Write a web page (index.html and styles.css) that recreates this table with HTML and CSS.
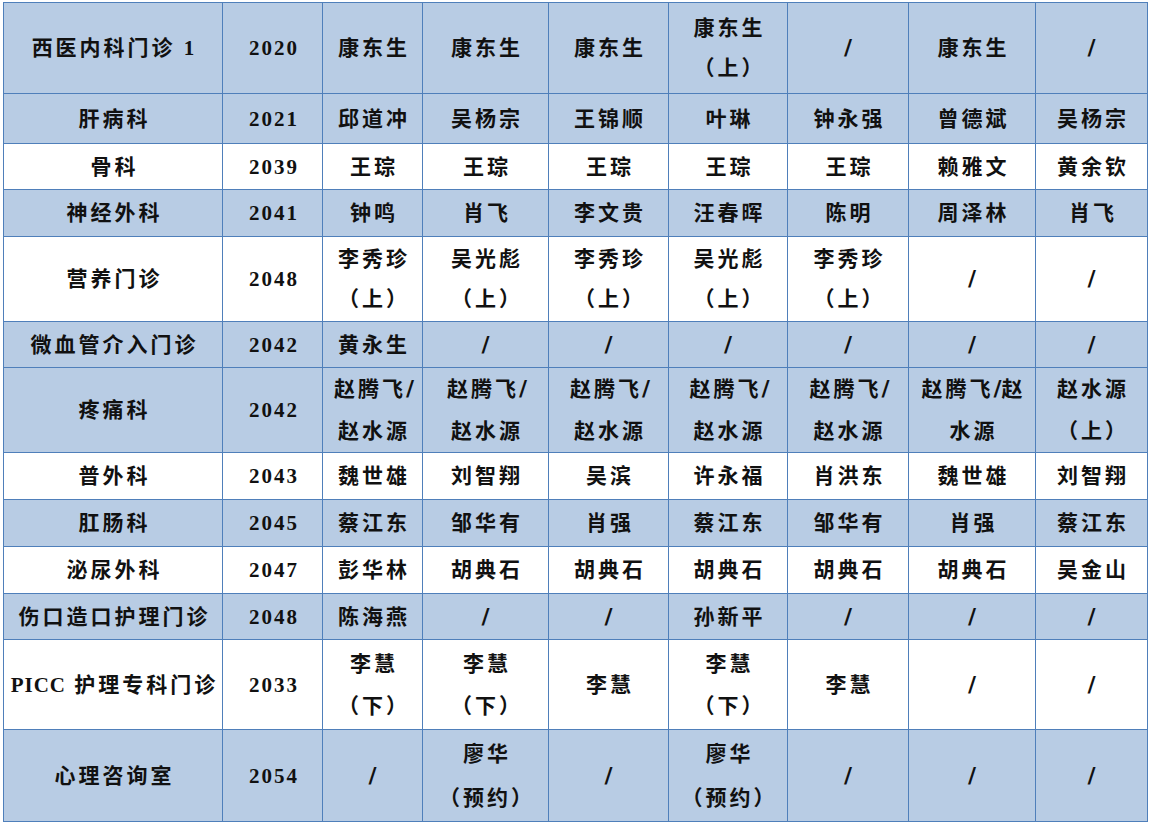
FILE: index.html
```html
<!DOCTYPE html>
<html lang="zh-CN">
<head>
<meta charset="utf-8">
<title>门诊排班表</title>
<link rel="stylesheet" href="styles.css">
</head>
<body>
<table class="schedule">
  <colgroup>
    <col class="c-dept"><col class="c-room"><col class="c-a"><col class="c-b"><col class="c-c"><col class="c-d"><col class="c-e"><col class="c-f"><col class="c-g">
  </colgroup>
  <tbody>
    <tr class="blue h91"><td>西医内科门诊 1</td><td class="num">2020</td><td>康东生</td><td>康东生</td><td>康东生</td><td>康东生<br>（上）</td><td class="none">/</td><td>康东生</td><td class="none">/</td></tr>
    <tr class="blue h50"><td>肝病科</td><td class="num">2021</td><td>邱道冲</td><td>吴杨宗</td><td>王锦顺</td><td>叶琳</td><td>钟永强</td><td>曾德斌</td><td>吴杨宗</td></tr>
    <tr class="white h46"><td>骨科</td><td class="num">2039</td><td>王琮</td><td>王琮</td><td>王琮</td><td>王琮</td><td>王琮</td><td>赖雅文</td><td>黄余钦</td></tr>
    <tr class="blue h47"><td>神经外科</td><td class="num">2041</td><td>钟鸣</td><td>肖飞</td><td>李文贵</td><td>汪春晖</td><td>陈明</td><td>周泽林</td><td>肖飞</td></tr>
    <tr class="white h85"><td>营养门诊</td><td class="num">2048</td><td>李秀珍<br>（上）</td><td>吴光彪<br>（上）</td><td>李秀珍<br>（上）</td><td>吴光彪<br>（上）</td><td>李秀珍<br>（上）</td><td class="none">/</td><td class="none">/</td></tr>
    <tr class="blue h46"><td>微血管介入门诊</td><td class="num">2042</td><td>黄永生</td><td class="none">/</td><td class="none">/</td><td class="none">/</td><td class="none">/</td><td class="none">/</td><td class="none">/</td></tr>
    <tr class="blue h85 tall"><td>疼痛科</td><td class="num">2042</td><td>赵腾飞<span class="sl">/</span><br>赵水源</td><td>赵腾飞<span class="sl">/</span><br>赵水源</td><td>赵腾飞<span class="sl">/</span><br>赵水源</td><td>赵腾飞<span class="sl">/</span><br>赵水源</td><td>赵腾飞<span class="sl">/</span><br>赵水源</td><td>赵腾飞<span class="sl">/</span>赵<br>水源</td><td>赵水源<br>（上）</td></tr>
    <tr class="white h47"><td>普外科</td><td class="num">2043</td><td>魏世雄</td><td>刘智翔</td><td>吴滨</td><td>许永福</td><td>肖洪东</td><td>魏世雄</td><td>刘智翔</td></tr>
    <tr class="blue h47"><td>肛肠科</td><td class="num">2045</td><td>蔡江东</td><td>邹华有</td><td>肖强</td><td>蔡江东</td><td>邹华有</td><td>肖强</td><td>蔡江东</td></tr>
    <tr class="white h47"><td>泌尿外科</td><td class="num">2047</td><td>彭华林</td><td>胡典石</td><td>胡典石</td><td>胡典石</td><td>胡典石</td><td>胡典石</td><td>吴金山</td></tr>
    <tr class="blue h46"><td>伤口造口护理门诊</td><td class="num">2048</td><td>陈海燕</td><td class="none">/</td><td class="none">/</td><td>孙新平</td><td class="none">/</td><td class="none">/</td><td class="none">/</td></tr>
    <tr class="white h90 tall"><td><span class="latin">PICC</span> 护理专科门诊</td><td class="num">2033</td><td>李慧<br>（下）</td><td>李慧<br>（下）</td><td>李慧</td><td>李慧<br>（下）</td><td>李慧</td><td class="none">/</td><td class="none">/</td></tr>
    <tr class="blue h92 taller"><td>心理咨询室</td><td class="num">2054</td><td class="none">/</td><td>廖华<br>（预约）</td><td class="none">/</td><td>廖华<br>（预约）</td><td class="none">/</td><td class="none">/</td><td class="none">/</td></tr>
  </tbody>
</table>
</body>
</html>
```

FILE: styles.css
```css
html, body {
  margin: 0;
  padding: 0;
  background: #ffffff;
}

body {
  padding: 2px 0 0 3px;
}

.schedule {
  border-collapse: collapse;
  table-layout: fixed;
  width: 1144px;
  font-family: "Liberation Serif", "Noto Sans CJK SC", serif;
  font-size: 21px;
  font-weight: 600;
  color: #111111;
  letter-spacing: 3px;
}

.c-dept { width: 219px; }
.c-room { width: 100px; }
.c-a { width: 100px; }
.c-b { width: 126px; }
.c-c { width: 120px; }
.c-d { width: 119px; }
.c-e { width: 121px; }
.c-f { width: 127px; }
.c-g { width: 112px; }

.schedule td {
  border: 1px solid #4f7fba;
  padding: 0 0 0 3px;
  text-align: center;
  vertical-align: middle;
  line-height: 40px;
  white-space: nowrap;
}

.schedule .tall td { line-height: 42px; }
.schedule .taller td { line-height: 44px; }

.schedule td.num {
  letter-spacing: 2px;
}

.schedule td.none {
  font-family: "DejaVu Sans", sans-serif;
  font-weight: bold;
  font-size: 22px;
  letter-spacing: 0;
  padding-left: 0;
}

.sl {
  font-family: "DejaVu Sans", sans-serif;
  font-weight: bold;
  font-size: 22px;
  letter-spacing: 0;
  line-height: 0;
}

.latin {
  letter-spacing: 1px;
}

.blue td { background: #b8cce4; }
.white td { background: #ffffff; }

.h46 { height: 46px; }
.h47 { height: 47px; }
.h50 { height: 50px; }
.h85 { height: 85px; }
.h90 { height: 90px; }
.h91 { height: 91px; }
.h92 { height: 92px; }
```
